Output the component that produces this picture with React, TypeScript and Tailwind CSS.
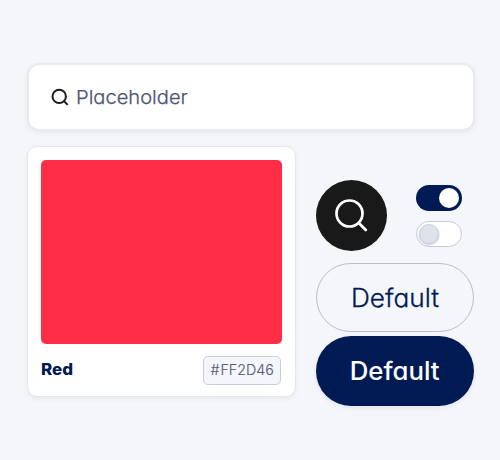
import React from "react";

function Search({ className = "" }: { className?: string }) {
  return (
    <svg viewBox="0 0 18 18" fill="none" stroke="currentColor" strokeWidth="2" className={className}>
      <circle cx="8.2" cy="8.4" r="6.7" />
      <path d="m12.7 12.9 4 4" />
    </svg>
  );
}

function Action({ solid = false }: { solid?: boolean }) {
  return (
    <button
      className={
        solid
          ? "mt-1 flex h-[70px] w-[158px] items-center justify-center rounded-full bg-[#001a54] text-[25px] font-medium text-white shadow-[0_2px_5px_#001a5412]"
          : "mt-3 flex h-[69px] w-[158px] items-center justify-center rounded-full border-[1.5px] border-[#babdca] text-[25px] font-light text-[#001a54] [-webkit-text-stroke:0.3px_#001a54]"
      }
    >
      <span className={solid ? "relative top-[1px] scale-x-[1.03]" : "relative top-[1px] scale-x-[1.05]"}>Default</span>
    </button>
  );
}

function Toggle({ on = false }: { on?: boolean }) {
  return (
    <button
      role="switch"
      aria-checked={on}
      aria-label="Toggle"
      className={
        on
          ? "flex h-[26px] w-[46px] items-center justify-end rounded-full bg-[#001a54] px-[3px]"
          : "flex h-[26px] w-[46px] items-center rounded-full border-[1.5px] border-[#c8cad8] bg-white px-[2px]"
      }
    >
      <span
        className={
          on
            ? "size-5 rounded-full bg-white"
            : "size-5 rounded-full border border-[#cfd2dd] bg-[#dfe2eb] shadow-[0_1px_2px_#001a5440]"
        }
      />
    </button>
  );
}

export default function App() {
  return (
    <main className="h-[460px] w-[500px] bg-[#f5f6fa] pt-[63px] pl-[27px] font-['Inter',sans-serif] [font-feature-settings:'cv11']">
      <label className="flex h-[68px] w-[448px] items-center rounded-xl border-2 border-[#e8eaf0] bg-white pl-[22px] shadow-[0_2px_5px_#1b2a5510]">
        <Search className="size-[18px] text-[#17191d]" />
        <span className="ml-[7px] origin-left scale-x-[1.045] text-[19.25px] font-light text-[#4c5674] [-webkit-text-stroke:0.25px_#4c5674]">
          Placeholder
        </span>
      </label>
      <div className="mt-[15px] flex">
        <section className="h-[251px] w-[269px] rounded-[10px] border-[1.5px] border-[#e5e7ee] bg-white px-[13px] pt-[13px] shadow-[0_2px_5px_#1b2a5510]">
          <div className="h-[184px] w-[241px] rounded-[5px] bg-[#ff2d46]" />
          <div className="mt-3 flex w-[240px] items-start justify-between">
            <span className="origin-left scale-x-[1.06] text-[16px] leading-[26px] font-extrabold text-[#001a54]">Red</span>
            <span className="flex h-[29px] w-[78px] items-center justify-center rounded-[5px] border-[1.5px] border-[#c9ccda] bg-[#f5f6fa] pb-[2px] text-[14px] font-light text-[#555d78] [-webkit-text-stroke:0.15px_#555d78]">
              <span className="scale-x-[1.02]">
                <span className="mr-px">#</span>FF2D46
              </span>
            </span>
          </div>
        </section>
        <div className="ml-5 w-[159px] pt-[34px]">
          <div className="flex">
            <button aria-label="Search" className="flex size-[71px] items-center justify-center rounded-full bg-[#191919] text-white">
              <svg viewBox="0 0 71 71" fill="none" stroke="currentColor" strokeWidth="2.7" strokeLinecap="round" className="size-[71px]">
                <circle cx="33.5" cy="33.5" r="13" />
                <path d="m42.8 43 7 7" />
              </svg>
            </button>
            <div className="ml-[29px] flex flex-col gap-[10px] pt-[5px]">
              <Toggle on />
              <Toggle />
            </div>
          </div>
          <Action />
          <Action solid />
        </div>
      </div>
    </main>
  );
}
